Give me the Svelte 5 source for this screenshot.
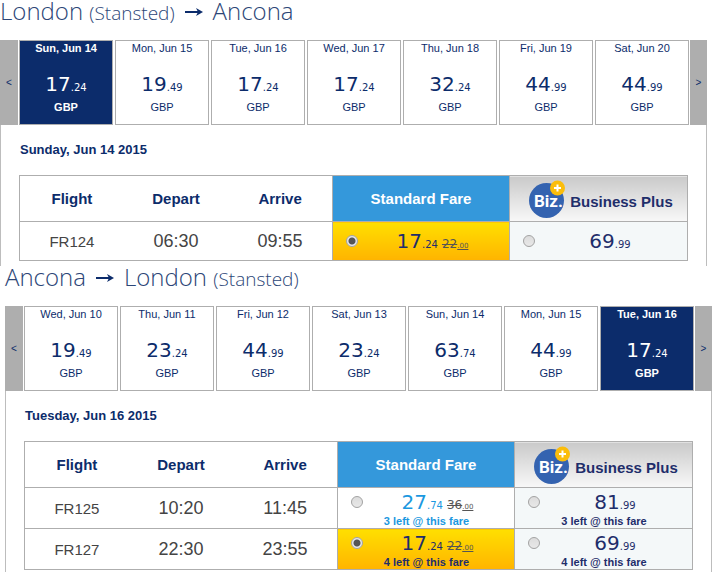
<script>
  const days = (list) => list.map(([label, whole, cents]) => ({ label, whole, cents }));

  let trips = $state([
    {
      id: 'outbound',
      from: { city: 'London', airport: '(Stansted)' },
      to: { city: 'Ancona' },
      heading: 'Sunday, Jun 14 2015',
      selected: 0,
      choice: 'FR124-standard',
      days: days([
        ['Sun, Jun 14', 17, 24],
        ['Mon, Jun 15', 19, 49],
        ['Tue, Jun 16', 17, 24],
        ['Wed, Jun 17', 17, 24],
        ['Thu, Jun 18', 32, 24],
        ['Fri, Jun 19', 44, 99],
        ['Sat, Jun 20', 44, 99]
      ]),
      flights: [
        {
          code: 'FR124',
          depart: '06:30',
          arrive: '09:55',
          standard: { whole: 17, cents: 24, was: 22 },
          business: { whole: 69, cents: 99 }
        }
      ]
    },
    {
      id: 'inbound',
      from: { city: 'Ancona' },
      to: { city: 'London', airport: '(Stansted)' },
      heading: 'Tuesday, Jun 16 2015',
      selected: 6,
      choice: 'FR127-standard',
      days: days([
        ['Wed, Jun 10', 19, 49],
        ['Thu, Jun 11', 23, 24],
        ['Fri, Jun 12', 44, 99],
        ['Sat, Jun 13', 23, 24],
        ['Sun, Jun 14', 63, 74],
        ['Mon, Jun 15', 44, 99],
        ['Tue, Jun 16', 17, 24]
      ]),
      flights: [
        {
          code: 'FR125',
          depart: '10:20',
          arrive: '11:45',
          left: 3,
          standard: { whole: 27, cents: 74, was: 36 },
          business: { whole: 81, cents: 99 }
        },
        {
          code: 'FR127',
          depart: '22:30',
          arrive: '23:55',
          left: 4,
          standard: { whole: 17, cents: 24, was: 22 },
          business: { whole: 69, cents: 99 }
        }
      ]
    }
  ]);
</script>

{#snippet place(p)}{p.city}{#if p.airport}{' '}<small>{p.airport}</small>{/if}{/snippet}

{#snippet price(p)}<span class="price">{p.whole}<span class="cents">.{p.cents}</span>{#if p.was}<s>{p.was}<span class="tiny">.00</span></s>{/if}</span>{/snippet}

{#snippet fare(trip, flight, kind)}
  {@const key = `${flight.code}-${kind}`}
  <td class="fare {kind}" class:chosen={trip.choice === key}>
    <label>
      <input
        type="radio"
        name={trip.id}
        value={key}
        checked={trip.choice === key}
        onchange={() => (trip.choice = key)}
      />
      <span class="offer">
        {@render price(flight[kind])}
        {#if flight.left}<span class="left">{flight.left} left @ this fare</span>{/if}
      </span>
    </label>
  </td>
{/snippet}

<main>
  {#each trips as trip (trip.id)}
    <section class={trip.id}>
      <h1>
        <span>{@render place(trip.from)}</span>
        <svg width="18" height="9" viewBox="0 0 18 9" aria-hidden="true">
          <path d="M0 5H14" stroke="#0c2c6b" stroke-width="2" />
          <path d="M11 1L18 5L11 9L13 5Z" fill="#0c2c6b" />
        </svg>
        <span>{@render place(trip.to)}</span>
      </h1>

      <div class="strip">
        <button class="nav" aria-label="Earlier dates">&lt;</button>
        <div class="days">
          {#each trip.days as day, i}
            <button class="day" class:selected={trip.selected === i} onclick={() => (trip.selected = i)}>
              <span class="date">{day.label}</span>
              {@render price(day)}
              <span class="currency">GBP</span>
            </button>
          {/each}
        </div>
        <button class="nav next" aria-label="Later dates">&gt;</button>
      </div>

      <div class="panel">
        <h2>{trip.heading}</h2>
        <table>
          <colgroup>
            <col /><col /><col />
            <col class="cost" /><col class="cost-plus" />
          </colgroup>
          <thead>
            <tr>
              <th>Flight</th>
              <th>Depart</th>
              <th>Arrive</th>
              <th class="standard">Standard Fare</th>
              <th class="business">
                <span class="brand">
                  <svg width="37" height="38" viewBox="0 0 37 38" aria-hidden="true">
                    <circle cx="17.5" cy="20.5" r="17.5" fill="#3463b0" />
                    <text x="5" y="27" class="biz">Biz.</text>
                    <circle cx="28.5" cy="8" r="7.5" fill="#fbbd0b" />
                    <path d="M28.5 4.5V11.5M25 8H32" stroke="#fff" stroke-width="2" />
                  </svg>
                  <span>Business Plus</span>
                </span>
              </th>
            </tr>
          </thead>
          <tbody>
            {#each trip.flights as flight}
              <tr class:tall={flight.left}>
                <td class="code">{flight.code}</td>
                <td class="time">{flight.depart}</td>
                <td class="time">{flight.arrive}</td>
                {@render fare(trip, flight, 'standard')}
                {@render fare(trip, flight, 'business')}
              </tr>
            {/each}
          </tbody>
        </table>
      </div>
    </section>
  {/each}
</main>

<style>
  :global(body) {
    margin: 0;
    background: #fff;
  }
  main {
    font-family: 'Liberation Sans', Arial, sans-serif;
    font-size: 11px;
    color: #0c2c6b;
  }
  .outbound {
    margin-right: 5px;
  }
  .inbound {
    margin-left: 5px;
  }
  h1 {
    display: flex;
    align-items: center;
    gap: 10px;
    height: 22px;
    margin: 0 0 18px;
    color: #2c4677;
    font: 300 24px/22px 'Open Sans', 'Noto Sans', sans-serif;
    white-space: nowrap;
  }
  h1 small {
    font-size: 19px;
    line-height: 1;
  }
  .strip {
    display: flex;
    gap: 1px;
    height: 85px;
  }
  .days {
    display: flex;
    flex: 1;
    gap: 2px;
  }
  button {
    padding: 0;
    border: 0;
    font: inherit;
    color: inherit;
    cursor: pointer;
  }
  .nav {
    width: 18px;
    background: #aeaeae;
    font-size: 10px;
  }
  .next {
    width: 17px;
  }
  .day {
    display: flex;
    flex: 1;
    flex-direction: column;
    justify-content: flex-start;
    align-items: center;
    border: 1px solid #aeaeae;
    background: #fff;
  }
  .day .price {
    margin: 17px 0 4px;
  }
  .date,
  .currency {
    line-height: 14px;
  }
  .selected {
    background: #0c2c6b;
    color: #fff;
  }
  .selected .date,
  .selected .currency {
    font-weight: bold;
  }
  .price {
    font-family: 'DejaVu Sans', Verdana, sans-serif;
    font-size: 20px;
    line-height: 24px;
    white-space: nowrap;
  }
  .cents,
  s,
  .tiny {
    line-height: 1;
  }
  .cents {
    font-size: 10px;
  }
  .panel {
    padding: 17px 18px 5px;
    border: solid #bdbdbd;
    border-width: 0 1px;
  }
  h2 {
    margin: 0 0 17px 1px;
    font-size: 13px;
    line-height: 16px;
  }
  table {
    width: 100%;
    border: 1px solid #aeaeae;
    border-collapse: collapse;
    table-layout: fixed;
  }
  .cost {
    width: 177px;
  }
  .cost-plus {
    width: 178px;
  }
  th,
  td {
    padding: 0;
    border-bottom: 1px solid #aeaeae;
    text-align: center;
  }
  th {
    height: 45px;
    font-size: 15px;
  }
  td {
    height: 38px;
    color: #444;
  }
  .tall td {
    height: 40px;
  }
  .standard,
  .business {
    border-left: 1px solid #aeaeae;
  }
  th.standard {
    background: #3498db;
    color: #fff;
  }
  th.business {
    background: linear-gradient(#cacaca, #f8f8f8);
    color: #1f2e6b;
  }
  .brand {
    display: flex;
    justify-content: center;
    align-items: center;
    gap: 4px;
    padding-left: 5px;
  }
  .brand span {
    padding-top: 6px;
  }
  .biz {
    fill: #fff;
    font: bold 17px Roboto, 'Liberation Sans', sans-serif;
  }
  .code {
    font-size: 15px;
  }
  .time {
    font-size: 18px;
  }
  td.business {
    background: #f4f8f9;
  }
  .fare label {
    display: flex;
    align-items: center;
    padding: 0 2px 0 13px;
    color: #1f2e6b;
  }
  .tall .fare.standard:not(.chosen) label {
    color: #1b98e0;
  }
  td.chosen {
    background: linear-gradient(#ffdf00, #ffb400);
  }
  input {
    flex: none;
    width: 12px;
    height: 12px;
    margin: 0;
    border: 1px solid #a3a3a3;
    border-radius: 50%;
    appearance: none;
    background: linear-gradient(#dcdcdc, #e8e8e8);
  }
  input:checked {
    background: radial-gradient(circle, #555 0 3px, #e8e8e8 4px);
  }
  .tall input {
    margin-bottom: 12px;
  }
  .offer {
    display: flex;
    flex: 1;
    flex-direction: column;
  }
  .tall .price {
    line-height: 26px;
  }
  s {
    margin-left: 4px;
    color: #555;
    font-size: 12px;
  }
  .tiny {
    font-size: 7px;
  }
  .left {
    margin-right: 22px;
    font-weight: bold;
    line-height: 12px;
  }
</style>
